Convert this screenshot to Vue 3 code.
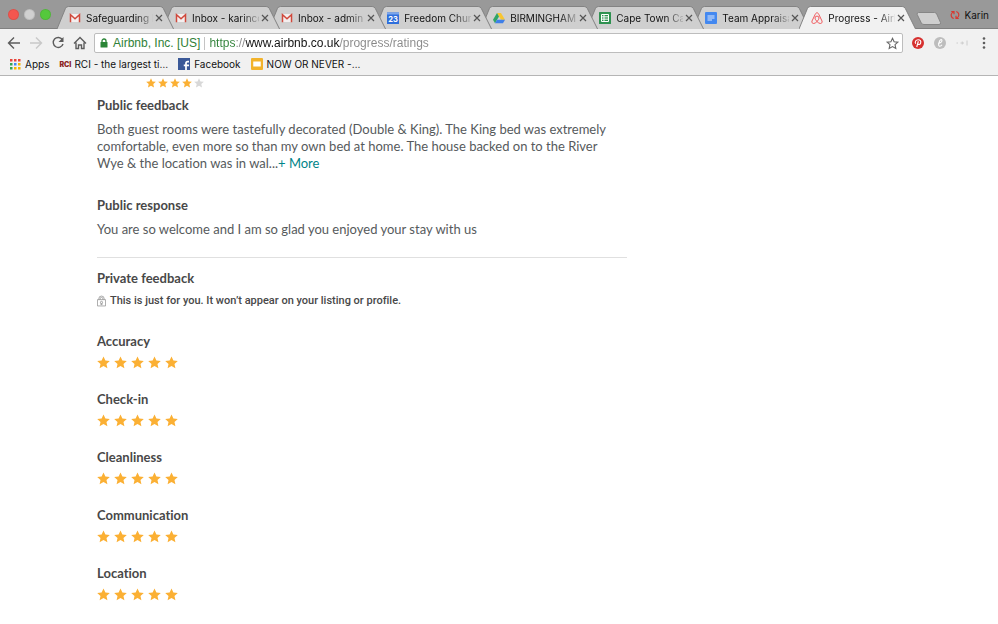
<script setup>
import { ref } from 'vue'

const tabs = [
  { icon: 'gmail', title: 'Safeguarding I' },
  { icon: 'gmail', title: 'Inbox - karinco' },
  { icon: 'gmail', title: 'Inbox - admin' },
  { icon: 'calendar', title: 'Freedom Chur' },
  { icon: 'drive', title: 'BIRMINGHAM' },
  { icon: 'sheets', title: 'Cape Town Ca' },
  { icon: 'docs', title: 'Team Appraisa' },
  { icon: 'airbnb', title: 'Progress - Airb', active: true },
]
const url = ref('https://www.airbnb.co.uk/progress/ratings')
const appColors = ['#e8453c', '#e8453c', '#e8453c', '#35a354', '#4285f4', '#f5b400', '#35a354', '#f5b400', '#f5b400']
const categories = ['Accuracy', 'Check-in', 'Cleanliness', 'Communication', 'Location']
const starPath = 'M10 0.6 L12.9 6.9 L19.7 7.6 L14.6 12.2 L16 19 L10 15.5 L4 19 L5.4 12.2 L0.3 7.6 L7.1 6.9 Z'
</script>

<template>
  <div class="browser">
    <header class="chrome">
      <div class="strip">
        <div class="lights">
          <button class="light red" aria-label="Close window"></button>
          <button class="light grey" aria-label="Minimise window"></button>
          <button class="light green" aria-label="Zoom window"></button>
        </div>
        <nav class="tabs" aria-label="Tabs">
          <div
            v-for="(tab, i) in tabs"
            :key="i"
            class="tab"
            :class="{ active: tab.active }"
            :style="{ zIndex: tab.active ? 20 : 10 - i }"
          >
            <svg class="shape" viewBox="0 0 118 23" preserveAspectRatio="none" aria-hidden="true">
              <path d="M0 23 L8.5 2.5 Q9.3 .5 11.5 .5 H104 Q106.200 .5 107.200 2.500 L117.500 23" />
            </svg>
            <svg v-if="tab.icon === 'gmail'" class="fav" viewBox="0 0 24 24">
              <rect x="2" y="4" width="20" height="16" fill="#f4eeee" />
              <path d="M3 20.500V5.500L12 13.500L21 5.500V20.500" fill="none" stroke="#d0493c" stroke-width="3" />
            </svg>
            <svg v-else-if="tab.icon === 'calendar'" class="fav" viewBox="0 0 24 24">
              <rect x="0" y="1" width="24" height="23" fill="#2f6fdc" />
              <rect x="0" y="1" width="24" height="4" fill="#7ca6ec" />
              <text x="12" y="19" text-anchor="middle" font-size="15" font-weight="700" fill="#fff">23</text>
            </svg>
            <svg v-else-if="tab.icon === 'drive'" class="fav" viewBox="0 0 24 24">
              <path d="M8 2h8l8 13.500h-8z" fill="#f8c630" />
              <path d="M8 2l4 7L4 22.500L0 15.500z" fill="#2ea566" />
              <path d="M8 15.500h16l-4 7H4z" fill="#3f7fe8" />
            </svg>
            <svg v-else-if="tab.icon === 'sheets'" class="fav" viewBox="0 0 24 24">
              <rect width="24" height="24" rx="1" fill="#2f9150" />
              <path d="M5 5h14v14H5z M5 9.700h14 M5 14.300h14 M10 5v14" fill="none" stroke="#fff" stroke-width="2" />
            </svg>
            <svg v-else-if="tab.icon === 'docs'" class="fav" viewBox="0 0 24 24">
              <rect width="24" height="24" rx="2" fill="#4388f0" />
              <path d="M5 8h14 M5 12h14 M5 16h9" fill="none" stroke="#dfeafc" stroke-width="2.200" />
            </svg>
            <svg v-else class="fav" viewBox="0 0 24 24">
              <path
                d="M12 1.500C10 1.500 9 3.500 8 5.500L2 18C.8 21 3 23 5.500 23C9 23 16 16 16 12.200A4 4 0 0 0 8 12.200C8 16 15 23 18.500 23C21 23 23.200 21 22 18L16 5.500C15 3.500 14 1.500 12 1.500Z"
                fill="none" stroke="#f0595d" stroke-width="2"
              />
            </svg>
            <a class="title" href="#">{{ tab.title }}</a>
            <button class="close" aria-label="Close tab">
              <svg viewBox="0 0 8 8"><path d="M1 1L7 7M7 1L1 7" /></svg>
            </button>
          </div>
        </nav>
        <button class="newtab" aria-label="New tab">
          <svg viewBox="0 0 26 13"><path d="M2.500 .5H18.500Q20 .5 20.700 2L24.500 10.500Q25 12.500 23 12.500H8Q6 12.500 5.300 11L1.200 2.500Q.8 .5 2.500 .5Z" /></svg>
        </button>
        <button class="profile">
          <svg viewBox="0 0 20 20" aria-hidden="true">
            <path d="M7.500 17C2.500 15.500 1 10 3.500 6.500C4.500 5 6 4 7.500 3.500M2.500 3H8V8.500M12.500 3C17.500 4.500 19 10 16.500 13.500C15.500 15 14 16 12.500 16.500M17.500 17H12V11.500" />
          </svg>
          Karin
        </button>
      </div>

      <div class="toolbar">
        <div class="navs">
          <button aria-label="Back"><svg viewBox="0 0 14 14"><path d="M13 7H2M7 1.500L1.500 7L7 12.500" /></svg></button>
          <button aria-label="Forward" class="off"><svg viewBox="0 0 14 14"><path d="M1 7H12M7 1.500L12.500 7L7 12.500" /></svg></button>
          <button aria-label="Reload"><svg viewBox="0 0 14 14"><path d="M11.300 3.500A5 5 0 1 0 12 8" /><path d="M12.500 1v5h-5z" class="solid" /></svg></button>
          <button aria-label="Home"><svg viewBox="0 0 14 14"><path d="M1 7.500L7 1.500L13 7.500M3 6.500V12.500H5.500V9H8.500V12.500H11V6.500" /></svg></button>
        </div>
        <div class="omnibox">
          <svg class="secure" viewBox="0 0 8 10" aria-hidden="true">
            <rect x="0.500" y="4" width="7" height="5.500" rx=".5" fill="#2b8537" />
            <path d="M2 4.500V3A2 2 0 0 1 6 3V4.500" fill="none" stroke="#2b8537" stroke-width="1.300" />
          </svg>
          <label for="address" class="owner">Airbnb, Inc. [US]</label>
          <input id="address" v-model="url" class="address" type="text" spellcheck="false" />
          <button class="fave" aria-label="Bookmark this page">
            <svg viewBox="0 0 20 20"><path :d="starPath" /></svg>
          </button>
        </div>
        <div class="exts">
          <button aria-label="Pinterest">
            <svg viewBox="0 0 24 24">
              <circle cx="12" cy="12" r="12" fill="#d6302f" />
              <path d="M7.500 13.500C4.800 9.500 8 5.500 12.300 5.500C16.300 5.500 18.500 8.500 17.300 12C16.300 15 13 16 11.500 13.800M12.700 8.500L9.500 20" fill="none" stroke="#fff" stroke-width="2.300" />
            </svg>
          </button>
          <button aria-label="Script extension">
            <svg viewBox="0 0 24 24">
              <circle cx="12" cy="12" r="12" fill="#bdbdbd" />
              <path d="M8 13C14 12 16.500 9 15.800 6.500C15 4 12 5 10.800 9C9.500 13 8 18 11 18.500C13 18.800 15 17 16 15.500" fill="none" stroke="#fff" stroke-width="2.200" />
            </svg>
          </button>
          <button aria-label="Muted extension">
            <svg viewBox="0 0 24 24"><path d="M1 12h3M9 12h7M12.500 9v6M22 7v10" fill="none" stroke="#ccc" stroke-width="2" /></svg>
          </button>
          <button aria-label="Menu">
            <svg viewBox="0 0 24 24" fill="#5c5c5c"><circle cx="12" cy="3" r="2.600" /><circle cx="12" cy="12" r="2.600" /><circle cx="12" cy="21" r="2.600" /></svg>
          </button>
        </div>
      </div>

      <nav class="bookmarks" aria-label="Bookmarks">
        <a href="#">
          <svg viewBox="0 0 12 12" aria-hidden="true">
            <rect v-for="(c, i) in appColors" :key="i" :x="(i % 3) * 4 + 1" :y="Math.floor(i / 3) * 4 + 1" width="2.500" height="2.500" :fill="c" />
          </svg>
          Apps
        </a>
        <a href="#" class="rci"><b>RCI</b>RCI - the largest ti…</a>
        <a href="#">
          <svg viewBox="0 0 24 24" aria-hidden="true">
            <rect width="24" height="24" fill="#3b5998" />
            <path d="M16 24V10.500Q16 7 19.500 7H22M11.500 14.500H22" fill="none" stroke="#fff" stroke-width="3.500" />
          </svg>
          Facebook
        </a>
        <a href="#">
          <svg viewBox="0 0 24 24" aria-hidden="true">
            <rect width="24" height="24" rx="2" fill="#f2b32c" />
            <rect x="4.500" y="7" width="15" height="10" fill="#fff" />
          </svg>
          NOW OR NEVER -…
        </a>
      </nav>
    </header>

    <main class="page">
      <div class="stars small" role="img" aria-label="4 out of 5 stars">
        <svg v-for="n in 5" :key="n" viewBox="0 0 20 20" :class="{ empty: n === 5 }"><path :d="starPath" /></svg>
      </div>

      <section class="block">
        <h2>Public feedback</h2>
        <p>
          Both guest rooms were tastefully decorated (Double &amp; King). The King bed was extremely
          comfortable, even more so than my own bed at home. The house backed on to the River
          Wye &amp; the location was in wal...<a href="#" class="more">+ More</a>
        </p>
      </section>

      <section class="block response">
        <h2>Public response</h2>
        <p>You are so welcome and I am so glad you enjoyed your stay with us</p>
      </section>

      <section class="private">
        <h2>Private feedback</h2>
        <p class="notice">
          <svg viewBox="0 0 10 12" aria-hidden="true">
            <path d="M.5 4.500H9.500V11.500H.5ZM2 4.500V3.500A3 3 0 0 1 8 3.500V4.500M3.500 4.500V3.500A1.500 1.500 0 0 1 6.500 3.500V4.500" />
            <circle cx="5" cy="7.500" r="1.200" /><path d="M4.300 8.500V10H5.700V8.500" />
          </svg>
          This is just for you. It won’t appear on your listing or profile.
        </p>
      </section>

      <section v-for="name in categories" :key="name" class="category">
        <h2>{{ name }}</h2>
        <div class="stars" role="img" aria-label="5 out of 5 stars">
          <svg v-for="n in 5" :key="n" viewBox="0 0 20 20"><path :d="starPath" /></svg>
        </div>
      </section>
    </main>
  </div>
</template>

<style>
body { background: #fff; }
</style>

<style scoped>
* { box-sizing: border-box; }
button { border: 0; padding: 0; background: none; font: inherit; color: inherit; display: flex; align-items: center; justify-content: center; }
a { color: inherit; text-decoration: none; }
svg { display: block; flex: none; }

.browser { overflow: hidden; }
.chrome {
  font-family: Inter, "Liberation Sans", sans-serif;
  font-size: 10px;
  color: #111;
  background: #f1f1f1;
  border-bottom: 1px solid #b5b5b5;
}
.strip { display: flex; height: 29px; background: #999; border-bottom: 1px solid #808080; }
.lights { display: flex; align-items: center; gap: 5px; padding: 1px 0 0 8px; width: 57px; flex: none; }
.light { width: 11px; height: 11px; border-radius: 50%; border: 1px solid rgba(0, 0, 0, .08); }
.red { background: #f4564f; }
.grey { background: #d0d0d0; }
.green { background: #55c83c; }

.tabs { display: flex; flex: 1; min-width: 0; padding: 6px 11px 0 0; }
.tab { position: relative; display: flex; flex: 1; min-width: 0; align-items: center; margin-right: -11px; padding: 1px 11px 0 12px; gap: 5px; height: 23px; }
.shape { position: absolute; inset: 0; width: 100%; height: 100%; fill: #cfcfcf; stroke: #828282; stroke-width: 1; z-index: -1; }
.active .shape { fill: #f1f1f1; }
.fav { width: 12px; height: 12px; }
.title { flex: 1; min-width: 0; margin-right: -3px; overflow: hidden; white-space: nowrap; line-height: 14px; -webkit-mask-image: linear-gradient(to right, #000 50px, transparent 70px); mask-image: linear-gradient(to right, #000 50px, transparent 70px); }
.close { width: 8px; height: 12px; flex: none; }
.close svg { width: 8px; height: 8px; stroke: #555; stroke-width: 1.2; }

.newtab { width: 26px; padding-top: 8px; flex: none; }
.newtab svg { width: 26px; height: 13px; fill: #cfcfcf; stroke: #868686; }
.profile { gap: 4px; margin: 2px 9px 0 8px; flex: none; }
.profile svg { width: 10px; height: 10px; fill: none; stroke: #d8382f; stroke-width: 2.4; }

.toolbar { display: flex; align-items: center; height: 28px; }
.navs { display: flex; gap: 8px; padding: 0 7px 0 7px; }
.navs svg { width: 14px; height: 14px; fill: none; stroke: #5c5c5c; stroke-width: 1.4; }
.navs .off svg { stroke: #c8c8c8; }
.navs .solid { fill: #5c5c5c; stroke: none; }
.omnibox { display: flex; align-items: center; flex: 1; min-width: 0; height: 20px; background: #fff; border: 1px solid #bdbdbd; border-radius: 2px; padding: 0 4px 0 5px; font-family: "Liberation Sans", Arial, sans-serif; font-size: 12px; }
.secure { width: 8px; height: 10px; margin-right: 5px; }
.owner { color: #2f8138; border-right: 1px solid #c4c4c4; padding-right: 4px; margin-right: 4px; line-height: 13px; white-space: nowrap; }
.address {
  flex: 1; min-width: 0; border: 0; padding: 0; outline: 0; font: inherit; line-height: 16px;
  color: transparent; caret-color: #111;
  background: linear-gradient(to right, #2f8138 26px, #888 26px 36px, #111 36px 131px, #888 131px);
  -webkit-background-clip: text; background-clip: text;
}
.fave svg { width: 11px; height: 11px; fill: none; stroke: #666; stroke-width: 2; overflow: visible; }
.exts { display: flex; gap: 10px; padding: 0 8px 0 9px; }
.exts svg { width: 12px; height: 12px; }

.bookmarks { display: flex; align-items: center; height: 18px; padding: 0 9px 4px; gap: 10px; }
.bookmarks a { display: flex; align-items: center; gap: 4px; white-space: nowrap; }
.bookmarks svg { width: 12px; height: 12px; }
.rci b { font-size: 7px; font-weight: 900; color: #8d2424; }
.bookmarks .rci { gap: 3px; }

.page { font-family: Lato, "Liberation Sans", sans-serif; font-size: 13px; line-height: 17px; font-variant-ligatures: none; color: #565a5c; padding: 2px 0 16px 97px; max-width: 627px; }
h2, p { margin: 0; }
h2 { font-size: 13px; line-height: 17px; font-weight: 700; color: #484848; }
.stars { display: flex; gap: 4px; }
.stars svg { width: 13px; height: 13px; fill: #fbb034; }
.small { gap: 2px; margin-left: 49px; }
.small svg { width: 10px; height: 10px; }
.stars .empty { fill: #d8d8d8; }
.block { padding-top: 9px; }
.block p { padding: 7px 12px 0 0; }
.response { padding: 25px 0 19px; border-bottom: 1px solid #e0e0e0; }
.more { color: #008489; }
.private { padding: 12px 0 24px; }
.notice { display: flex; align-items: center; gap: 4px; padding-top: 5px; font-family: Roboto, "Liberation Sans", sans-serif; font-size: 11px; font-weight: 500; color: #484848; }
.notice svg { width: 9px; height: 12px; fill: none; stroke: #8a8a8a; stroke-width: .8; }
.category { height: 58px; }
.category .stars { padding: 6px 0 0; }
</style>
